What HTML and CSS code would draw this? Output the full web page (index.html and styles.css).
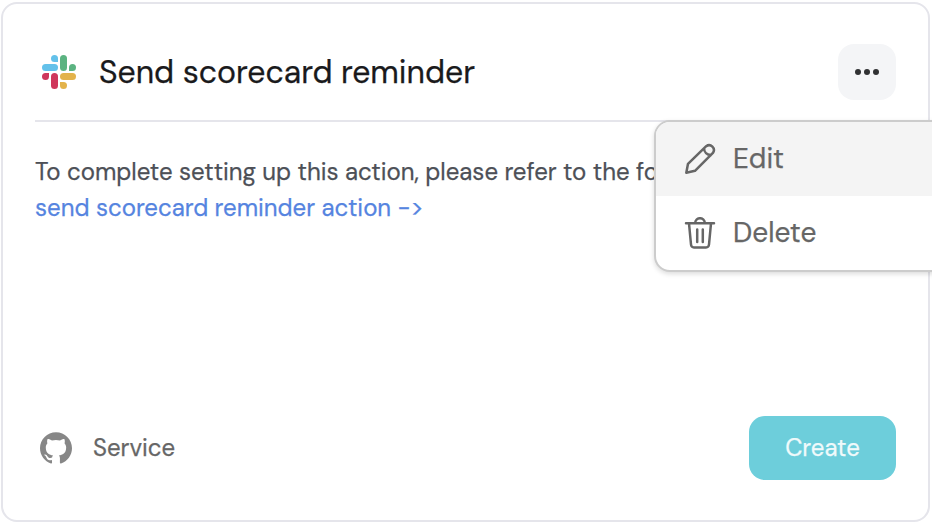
FILE: index.html
```html
<!DOCTYPE html>
<html lang="en">
<head>
<meta charset="utf-8">
<title>Send scorecard reminder</title>
<link rel="stylesheet" href="styles.css">
</head>
<body>
<article class="card">
  <header class="header">
    <svg class="slack" viewBox="0 0 34 34" aria-hidden="true">
      <g fill="#63c1ea"><path d="M12.5 0A3.5 3.5 0 0 1 16 3.5V7h-3.5a3.5 3.5 0 0 1 0-7z"/><rect y="9" width="16" height="7" rx="3.5"/></g>
      <g fill="#5bb381"><rect x="18" width="7" height="16" rx="3.5"/><path d="M27 16v-3.5a3.5 3.5 0 1 1 3.5 3.5z"/></g>
      <g fill="#e3b34b"><rect x="18" y="18" width="16" height="7" rx="3.5"/><path d="M18 27h3.5a3.5 3.5 0 1 1-3.5 3.5z"/></g>
      <g fill="#cf375c"><path d="M7 18v3.5A3.5 3.5 0 1 1 3.5 18z"/><rect x="9" y="18" width="7" height="16" rx="3.5"/></g>
    </svg>
    <h1 class="title">Send scorecard reminder</h1>
    <div class="actions">
      <button class="more" aria-label="More"><i></i><i></i><i></i></button>
      <div class="menu">
        <div class="item active">
          <svg class="icon" viewBox="0 0 32 32" aria-hidden="true"><path d="M2.300 29.700l1.700-8.900L22.200 3.200a4.800 4.800 0 0 1 6.700 6.700L11 27.800zM20 5.400c.2 3.700 3 6.500 6.700 6.700"/></svg>
          <span>Edit</span>
        </div>
        <div class="item">
          <svg class="icon" viewBox="0 0 32 32" aria-hidden="true"><path d="M2 6.300h28M5 6.300l2 21.200c.2 2 1 3 3 3h12c2 0 2.800-1 3-3l2-21.200M11.200 6a4.800 4.800 0 0 1 9.600 0M13.200 12.500V25M18.800 12.500V25"/></svg>
          <span>Delete</span>
        </div>
      </div>
    </div>
  </header>
  <p class="text"><span class="line">To complete setting up this action, please refer to the following</span><a class="link">send scorecard reminder action -&gt;</a></p>
  <footer class="footer">
    <svg class="github" viewBox="0 .297 24 23.5" aria-hidden="true"><path d="M12 .297c-6.63 0-12 5.373-12 12 0 5.303 3.438 9.8 8.205 11.385.6.113.82-.258.82-.577 0-.285-.01-1.04-.015-2.04-3.338.724-4.042-1.61-4.042-1.61C4.422 18.07 3.633 17.7 3.633 17.7c-1.087-.744.084-.729.084-.729 1.205.084 1.838 1.236 1.838 1.236 1.07 1.835 2.809 1.305 3.495.998.108-.776.417-1.305.76-1.605-2.665-.3-5.466-1.332-5.466-5.93 0-1.31.465-2.38 1.235-3.22-.135-.303-.54-1.523.105-3.176 0 0 1.005-.322 3.3 1.23.96-.267 1.98-.399 3-.405 1.02.006 2.04.138 3 .405 2.28-1.552 3.285-1.23 3.285-1.23.645 1.653.24 2.873.12 3.176.765.84 1.23 1.91 1.23 3.22 0 4.61-2.805 5.625-5.475 5.92.42.36.81 1.096.81 2.22 0 1.606-.015 2.896-.015 3.286 0 .315.21.69.825.57C20.565 22.092 24 17.592 24 12.297c0-6.627-5.373-12-12-12"/></svg>
    <span class="service">Service</span>
    <button class="create">Create</button>
  </footer>
</article>
</body>
</html>
```
FILE: styles.css
```css
* { box-sizing: border-box; }
body {
  margin: 0;
  padding: 2px 2px 2px 1px;
  height: 524px;
  overflow: hidden;
  background: #fff;
  font-family: "DM Sans", Inter, "Liberation Sans", sans-serif;
  font-optical-sizing: none;
  -webkit-text-stroke-width: .25px;
}
button { border: 0; padding: 0; font: inherit; }
.card {
  display: flex;
  flex-direction: column;
  height: 520px;
  padding: 40px 32px;
  border: 2px solid #e5e5eb;
  border-radius: 16px;
}
.header {
  display: flex;
  align-items: center;
  height: 78px;
  padding: 0 0 20px 7px;
  border-bottom: 2px solid #e5e5eb;
}
.slack { width: 34px; height: 34px; }
.title {
  margin: 0 auto 0 23px;
  font-size: 32px;
  line-height: 40px;
  font-weight: 400;
  color: #1a1a1c;
  white-space: nowrap;
}
.actions { position: relative; }
.more {
  display: flex;
  align-items: center;
  justify-content: center;
  gap: 3px;
  width: 58px;
  height: 56px;
  border-radius: 16px;
  background: #f4f5f7;
}
.more i { width: 6px; height: 6px; border-radius: 50%; background: #303133; }
.menu {
  position: absolute;
  top: 76px;
  left: -184px;
  width: 310px;
  height: 152px;
  overflow: hidden;
  border: 2px solid #ccc;
  border-radius: 16px;
  background: #fff;
  box-shadow: 0 2px 5px rgba(0, 0, 0, .14);
}
.item {
  display: flex;
  align-items: center;
  gap: 17px;
  height: 74px;
  padding-left: 28px;
  font-size: 28px;
  line-height: 36px;
  color: #666;
}
.active { background: #f4f4f4; }
.icon { width: 32px; height: 32px; fill: none; stroke: #666; stroke-width: 2.5; stroke-linejoin: round; stroke-linecap: round; }
.text {
  margin: 32px 0 0;
  font-size: 24px;
  line-height: 36px;
  color: #4d5057;
  white-space: nowrap;
}
.line, .link { display: block; }
.link { color: #5584e0; }
.footer {
  display: flex;
  align-items: center;
  height: 64px;
  margin-top: auto;
  padding-left: 5px;
}
.github { width: 32px; height: 32px; fill: #878787; }
.service { margin: 0 auto 0 21px; padding-bottom: 2px; font-size: 24px; color: #666; }
.create {
  width: 147px;
  height: 64px;
  padding-bottom: 2px;
  border-radius: 16px;
  background: #6dcedb;
  color: #f0fafb;
  font-size: 24px;
}
```
